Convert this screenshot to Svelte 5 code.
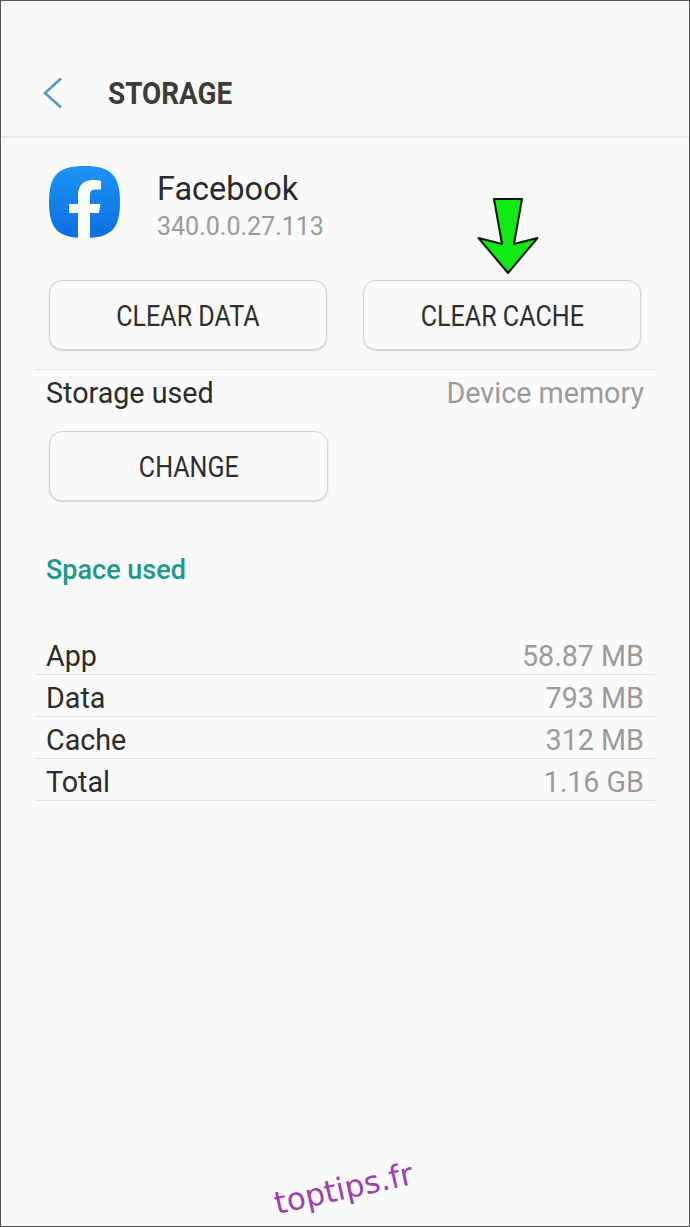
<script>
	const rows = [
		{ label: 'App', value: '58.87 MB' },
		{ label: 'Data', value: '793 MB' },
		{ label: 'Cache', value: '312 MB' },
		{ label: 'Total', value: '1.16 GB' }
	];
</script>

<div class="screen">
	<header class="topbar">
		<svg class="back" width="22" height="32" viewBox="0 0 22 32" fill="none">
			<path d="M19 1.5 L3 16 L19 30.5" stroke="#4f9dba" stroke-width="2.6" />
		</svg>
		<h1>STORAGE</h1>
	</header>

	<section class="app-info">
		<svg class="app-icon" width="71" height="72" viewBox="0 0 71 72">
			<defs>
				<linearGradient id="fb" x1="0" y1="0" x2="0" y2="1">
					<stop offset="0" stop-color="#1c94f5" />
					<stop offset="1" stop-color="#0a6ee0" />
				</linearGradient>
				<clipPath id="squircle">
					<path d="M35.5 0 C62 0 71 9 71 36 C71 63 62 72 35.5 72 C9 72 0 63 0 36 C0 9 9 0 35.5 0 Z" />
				</clipPath>
			</defs>
			<g clip-path="url(#squircle)">
				<rect width="71" height="72" fill="url(#fb)" />
				<path d="M29 72 V47 H20 V38 H29 V29 C29 19 35 14 44 14 C47.5 14 50 14.4 52 14.8 V23.5 H47 C42 23.5 41 25.5 41 29.5 V38 H51.5 L50 47 H41 V72 Z" fill="#fff" />
			</g>
		</svg>
		<div class="app-text">
			<div class="app-name">Facebook</div>
			<div class="app-version">340.0.0.27.113</div>
		</div>
		<svg class="arrow" width="62" height="78" viewBox="0 0 62 78">
			<path d="M17 2 H45 L37 47 L60.5 41 L31 76 L1.5 41 L25 47 Z" fill="#0eea12" stroke="#111" stroke-width="2" stroke-linejoin="round" />
		</svg>
	</section>

	<div class="button-row">
		<button class="btn"><span>CLEAR DATA</span></button>
		<button class="btn"><span>CLEAR CACHE</span></button>
	</div>

	<div class="row storage-row">
		<span class="label">Storage used</span>
		<span class="value">Device memory</span>
	</div>

	<div class="change-row">
		<button class="btn wide"><span>CHANGE</span></button>
	</div>

	<h2 class="section-title">Space used</h2>

	<div class="usage">
		{#each rows as row}
			<div class="row usage-row">
				<span class="label">{row.label}</span>
				<span class="value">{row.value}</span>
			</div>
		{/each}
	</div>

	<div class="watermark">toptips.fr</div>
</div>

<style>
	:global(body) {
		margin: 0;
	}

	.screen {
		position: relative;
		box-sizing: border-box;
		width: 690px;
		height: 1227px;
		overflow: hidden;
		background: #fafafa;
		border: 1px solid #555;
		font-family: Roboto, 'Liberation Sans', sans-serif;
		color: #2b2b2b;
	}

	.topbar {
		display: flex;
		align-items: center;
		box-sizing: border-box;
		height: 137px;
		padding: 48px 0 0 41px;
		border-bottom: 2px solid #e8e8e8;
	}

	.back {
		flex: none;
	}

	h1 {
		margin: 0 0 0 44px;
		font-size: 32px;
		font-weight: 700;
		color: #3c3c3c;
		transform: scaleX(0.87);
		transform-origin: left center;
	}

	.app-info {
		position: relative;
		display: flex;
		align-items: flex-start;
		height: 142px;
		padding: 28px 0 0 48px;
		box-sizing: border-box;
	}

	.app-icon {
		flex: none;
	}

	.app-text {
		margin: 1px 0 0 37px;
	}

	.app-name {
		font-size: 32.5px;
		line-height: 45px;
		color: #2b2b2b;
	}

	.app-version {
		font-size: 25px;
		line-height: 30px;
		color: #9b9b9b;
	}

	.arrow {
		position: absolute;
		left: 476px;
		top: 59px;
		overflow: visible;
	}

	.button-row {
		display: flex;
		gap: 36px;
		padding-left: 48px;
	}

	.btn {
		box-sizing: border-box;
		width: 278px;
		height: 70px;
		padding: 2px 0 0;
		background: #fafafa;
		border: 1px solid #d4d4d4;
		border-radius: 13px;
		box-shadow: 0 1px 2px rgba(0, 0, 0, 0.16);
		font-family: inherit;
		font-size: 29px;
		color: #2e2e2e;
	}

	.btn.wide {
		width: 279px;
	}

	.btn span {
		display: inline-block;
		transform: scaleX(0.865);
		white-space: nowrap;
	}

	.row {
		display: flex;
		justify-content: space-between;
		align-items: center;
		box-sizing: border-box;
		margin: 0 34px;
		padding: 0 11px;
		font-size: 28.7px;
	}

	.value {
		color: #9b9b9b;
	}

	.storage-row {
		height: 46px;
		margin-top: 19px;
		padding-top: 1px;
		border-top: 1px solid #e8e8e8;
	}

	.change-row {
		padding: 16px 0 0 48px;
	}

	.section-title {
		margin: 51px 0 0 45px;
		font-size: 27px;
		line-height: 36px;
		font-weight: 500;
		color: #1a9a8c;
	}

	.usage {
		margin-top: 45px;
	}

	.usage-row {
		height: 42px;
		border-bottom: 1px solid #e3e3e3;
		padding-top: 4px;
	}

	.watermark {
		position: absolute;
		left: 278px;
		top: 1182px;
		font-family: 'DejaVu Sans', sans-serif;
		font-size: 31px;
		line-height: 40px;
		color: #9c3fb0;
		transform: rotate(-12.5deg);
		transform-origin: left bottom;
	}
</style>
